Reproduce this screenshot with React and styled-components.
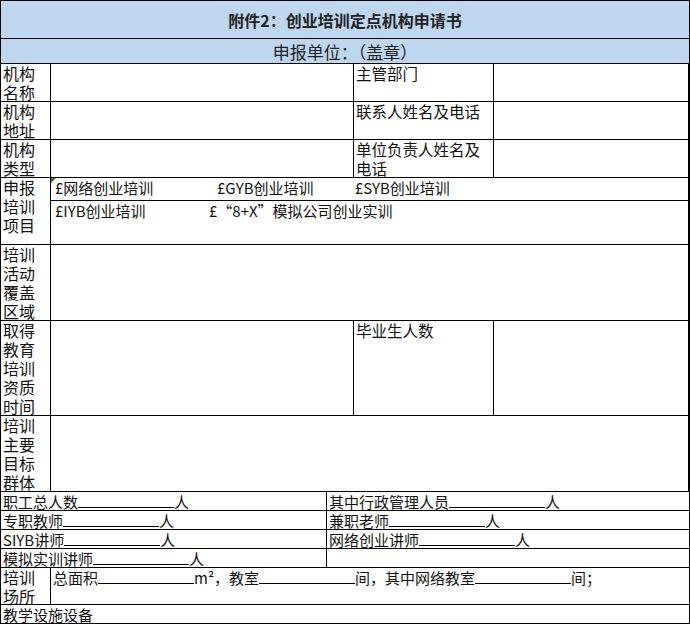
import React from "react";
import styled, { createGlobalStyle } from "styled-components";

const G = createGlobalStyle`
  body { margin: 0; background: #fff; font-family: "Noto Sans CJK SC", "Liberation Sans", sans-serif; }
`;
const Sheet = styled.div`
  width: 688px; border: 1px solid #000; background: #000;
  display: flex; flex-direction: column; gap: 1px;
`;
const Band = styled.div`
  height: ${p => p.h}px; background: #bdd7ee; display: flex; align-items: center; justify-content: center;
  font-size: ${p => p.fs}px; font-weight: ${p => (p.bold ? 700 : 400)}; color: #222;
`;
const Grid = styled.div`
  display: grid; gap: 1px; grid-template-columns: ${p => p.cols}; grid-template-rows: ${p => p.rows};
`;
const Cell = styled.div`
  background: #fff; font-size: 15px; line-height: 19px; color: #111; overflow: hidden;
  padding: ${p => p.pad || "0 2px"}; grid-row: ${p => p.rs || "auto"}; grid-column: ${p => p.cs || "auto"};
  position: relative; white-space: nowrap;
`;
const Label = styled(Cell)`
  font-size: 16px; white-space: normal; padding: 0 15px 0 2px; word-break: break-all;
`;
const WrapCell = styled(Cell)`
  font-size: 15.5px; white-space: normal; padding: 0 6px 0 2px;
`;
const Mark = styled.span`
  position: absolute; left: 0; top: 0; width: 0; height: 0;
  border-top: 5px solid #1a8a1a; border-right: 5px solid transparent;
`;
const Blank = styled.span`
  display: inline-block; width: ${p => p.w}px; border-bottom: 1px solid #000; height: 15px; vertical-align: baseline;
`;
const Opt = styled.span` display: inline-block; width: ${p => p.w}px; `;

export default function App() {
  return (
    <>
      <G />
      <Sheet>
        <Band h={37} fs={16} bold>附件2：创业培训定点机构申请书</Band>
        <Band h={24} fs={17}>申报单位：（盖章）</Band>
        <Grid cols="49px 302px 139px 194px" rows="37px 37px 37px 22px 43px 75px 94px 75px">
          <Label>机构名称</Label><Cell /><WrapCell>主管部门</WrapCell><Cell />
          <Label>机构地址</Label><Cell /><WrapCell>联系人姓名及电话</WrapCell><Cell />
          <Label>机构类型</Label><Cell /><WrapCell>单位负责人姓名及电话</WrapCell><Cell />
          <Label rs="span 2">申报培训项目</Label>
          <Cell cs="span 3" pad="0 4px"><Mark /><Opt w={162}>£网络创业培训</Opt><Opt w={138}>£GYB创业培训</Opt><Opt w={120}>£SYB创业培训</Opt></Cell>
          <Cell cs="span 3" pad="0 4px"><Opt w={154}>£IYB创业培训</Opt>£“8+X”模拟公司创业实训</Cell>
          <Label>培训活动覆盖区域</Label><Cell cs="span 3" />
          <Label>取得教育培训资质时间</Label><Cell /><WrapCell>毕业生人数</WrapCell><Cell />
          <Label>培训主要目标群体</Label><Cell cs="span 3" />
        </Grid>
        <Grid cols="325px 362px" rows="18px 18px 18px 18px">
          <Cell>职工总人数<Blank w={96} />人</Cell><Cell>其中行政管理人员<Blank w={96} />人</Cell>
          <Cell>专职教师<Blank w={96} />人</Cell><Cell>兼职老师<Blank w={96} />人</Cell>
          <Cell>SIYB讲师<Blank w={96} />人</Cell><Cell>网络创业讲师<Blank w={96} />人</Cell>
          <Cell>模拟实训讲师<Blank w={96} />人</Cell><Cell />
        </Grid>
        <Grid cols="49px 638px" rows="36px">
          <Label>培训场所</Label>
          <Cell>总面积<Blank w={96} />m²，教室<Blank w={96} />间，其中网络教室<Blank w={96} />间；</Cell>
        </Grid>
        <Grid cols="688px" rows="18px">
          <Cell>教学设施设备</Cell>
        </Grid>
      </Sheet>
    </>
  );
}
